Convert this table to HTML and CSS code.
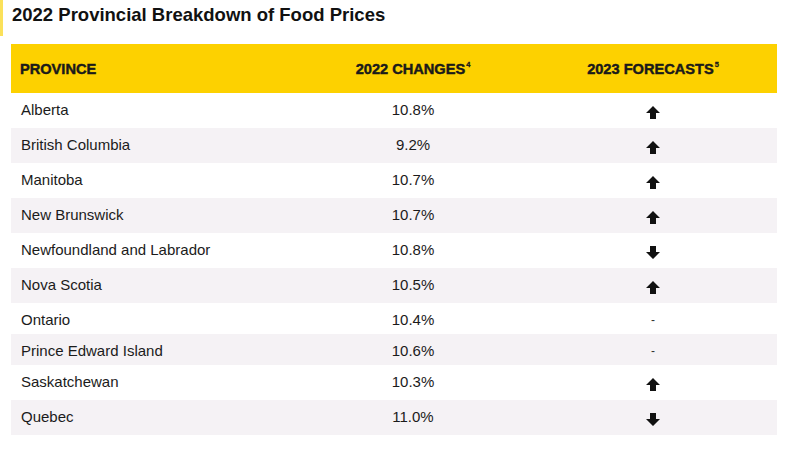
FILE: index.html
```html
<!DOCTYPE html>
<html lang="en">
<head>
<meta charset="utf-8">
<title>2022 Provincial Breakdown of Food Prices</title>
<link rel="stylesheet" href="styles.css">
</head>
<body>
<div class="title-wrap">
  <h1 class="title">2022 Provincial Breakdown of Food Prices</h1>
</div>
<div class="table">
  <div class="head">
    <div class="hcell c1">PROVINCE</div>
    <div class="hcell c2">2022 CHANGES<sup>4</sup></div>
    <div class="hcell c3">2023 FORECASTS<sup>5</sup></div>
  </div>
  <div class="row"><div class="cell c1">Alberta</div><div class="cell c2">10.8%</div><div class="cell c3"><svg class="arrow" viewBox="0 0 14 13"><polygon points="7,0 14,7 10,7 10,13 4,13 4,7 0,7"/></svg></div></div>
  <div class="row alt"><div class="cell c1">British Columbia</div><div class="cell c2">9.2%</div><div class="cell c3"><svg class="arrow" viewBox="0 0 14 13"><polygon points="7,0 14,7 10,7 10,13 4,13 4,7 0,7"/></svg></div></div>
  <div class="row"><div class="cell c1">Manitoba</div><div class="cell c2">10.7%</div><div class="cell c3"><svg class="arrow" viewBox="0 0 14 13"><polygon points="7,0 14,7 10,7 10,13 4,13 4,7 0,7"/></svg></div></div>
  <div class="row alt"><div class="cell c1">New Brunswick</div><div class="cell c2">10.7%</div><div class="cell c3"><svg class="arrow" viewBox="0 0 14 13"><polygon points="7,0 14,7 10,7 10,13 4,13 4,7 0,7"/></svg></div></div>
  <div class="row"><div class="cell c1">Newfoundland and Labrador</div><div class="cell c2">10.8%</div><div class="cell c3"><svg class="arrow" viewBox="0 0 14 13"><polygon points="4,0 10,0 10,6 14,6 7,13 0,6 4,6"/></svg></div></div>
  <div class="row alt"><div class="cell c1">Nova Scotia</div><div class="cell c2">10.5%</div><div class="cell c3"><svg class="arrow" viewBox="0 0 14 13"><polygon points="7,0 14,7 10,7 10,13 4,13 4,7 0,7"/></svg></div></div>
  <div class="row short"><div class="cell c1">Ontario</div><div class="cell c2">10.4%</div><div class="cell c3 dash">-</div></div>
  <div class="row alt short"><div class="cell c1">Prince Edward Island</div><div class="cell c2">10.6%</div><div class="cell c3 dash">-</div></div>
  <div class="row"><div class="cell c1">Saskatchewan</div><div class="cell c2">10.3%</div><div class="cell c3"><svg class="arrow" viewBox="0 0 14 13"><polygon points="7,0 14,7 10,7 10,13 4,13 4,7 0,7"/></svg></div></div>
  <div class="row alt"><div class="cell c1">Quebec</div><div class="cell c2">11.0%</div><div class="cell c3"><svg class="arrow" viewBox="0 0 14 13"><polygon points="4,0 10,0 10,6 14,6 7,13 0,6 4,6"/></svg></div></div>
</div>
</body>
</html>
```

FILE: styles.css
```css
* { box-sizing: border-box; }
html, body { margin: 0; padding: 0; background: #ffffff; }
body {
  width: 800px;
  height: 450px;
  overflow: hidden;
  font-family: "Liberation Sans", Arial, sans-serif;
  color: #1b1b1b;
}
.title-wrap {
  height: 36px;
  border-left: 3px solid #fbe15a;
  padding-left: 9px;
  padding-top: 4px;
}
.title {
  margin: 0;
  font-size: 18.5px;
  line-height: 22px;
  font-weight: 700;
  color: #111;
}
.table {
  margin: 8px 0 0 11px;
  width: 766px;
}
.head {
  display: grid;
  grid-template-columns: 279px 246px 234px 1fr;
  height: 49px;
  background: #fdd100;
  align-items: center;
}
.hcell {
  font-family: "Liberation Sans", Arial, sans-serif;
  font-weight: 700;
  font-size: 14.6px;
  -webkit-text-stroke: 0.45px #1a1a1a;
  color: #1a1a1a;
}
.hcell sup {
  font-size: 7.5px;
  vertical-align: top;
  position: relative;
  top: -1px;
  margin-left: 1px;
  -webkit-text-stroke: 0.3px #1a1a1a;
}
.hcell.c1 { padding-left: 9px; }
.c2, .c3 { text-align: center; }
.row {
  display: grid;
  grid-template-columns: 279px 246px 234px 1fr;
  height: 35px;
  align-items: start;
}
.row.short { height: 31px; }
.row.alt { background: #f5f2f5; }
.cell {
  font-size: 15px;
  line-height: 17px;
  padding-top: 8px;
}
.row.short .cell { padding-top: 8px; }
.cell.c1 { padding-left: 10px; }
.cell.c3 { display: flex; justify-content: center; padding-top: 13px; }
.cell.c3.dash { padding-top: 9px; font-size: 12px; color: #333; }
.arrow { width: 14px; height: 13px; fill: #111; display: block; }
```
